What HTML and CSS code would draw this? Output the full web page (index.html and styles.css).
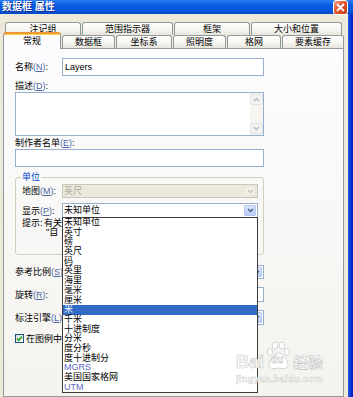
FILE: index.html
```html
<!DOCTYPE html>
<html lang="zh-CN">
<head>
    <meta charset="UTF-8">
    <meta name="viewport" content="width=device-width, initial-scale=1.0">
    <title>数据框 属性</title>
    <link rel="stylesheet" href="styles.css">
</head>
<body>

<div class="window">
    <div class="titlebar">
        <span class="title">数据框 属性</span>
        <span class="close">
            <svg width="9" height="9" viewBox="0 0 9 9"><path d="M1 1L8 8M8 1L1 8" stroke="#fff" stroke-width="1.8"/></svg>
        </span>
    </div>

    <div class="frame">
        <div class="dialog">
            <div class="tab-row back">
                <div class="tab w76">注记组</div>
                <div class="tab w91">范围指示器</div>
                <div class="tab w76">框架</div>
                <div class="tab w91">大小和位置</div>
            </div>
            <div class="tab-row front">
                <div class="tab active w58">常规</div>
                <div class="tab w53">数据框</div>
                <div class="tab w56">坐标系</div>
                <div class="tab w53">照明度</div>
                <div class="tab w54">格网</div>
                <div class="tab w62">要素缓存</div>
            </div>

            <div class="panel">
                <div class="form">
                    <div class="row">
                        <label class="lbl">名称<span class="key">(<u>N</u>)</span>:</label>
                        <input class="edit" type="text" value="Layers">
                    </div>

                    <div class="caption">描述<span class="key">(<u>D</u>)</span>:</div>
                    <div class="memo">
                        <div class="memo-text"></div>
                        <div class="vscroll">
                            <div class="sbtn"><svg width="7" height="5" viewBox="0 0 7 5"><path d="M1 4L3.5 1.5L6 4" stroke="#B4BAC4" stroke-width="1.3" fill="none"/></svg></div>
                            <div class="sbtn"><svg width="7" height="5" viewBox="0 0 7 5"><path d="M1 1L3.5 3.5L6 1" stroke="#B4BAC4" stroke-width="1.3" fill="none"/></svg></div>
                        </div>
                    </div>

                    <div class="caption tight">制作者名单<span class="key">(<u>E</u>)</span>:</div>
                    <input class="edit block" type="text" value="">

                    <fieldset class="group">
                        <legend>单位</legend>
                        <div class="row">
                            <label class="lbl short">地图<span class="key">(<u>M</u>)</span>:</label>
                            <div class="combo disabled h14">
                                <span class="val">英尺</span>
                                <span class="arrow"><svg width="7" height="5" viewBox="0 0 7 5"><path d="M1 1L3.5 3.5L6 1" stroke="#C9C7BA" stroke-width="1.4" fill="none"/></svg></span>
                            </div>
                        </div>
                        <div class="row gap5">
                            <label class="lbl short">显示<span class="key">(<u>P</u>)</span>:</label>
                            <div class="combo open">
                                <span class="val">未知单位</span>
                                <span class="arrow"><svg width="7" height="5" viewBox="0 0 7 5"><path d="M1 1L3.5 3.5L6 1" stroke="#4D6185" stroke-width="1.5" fill="none"/></svg></span>
                                <ul class="dropdown">
                                    <li>未知单位</li>
                                    <li>英寸</li>
                                    <li>磅</li>
                                    <li>英尺</li>
                                    <li>码</li>
                                    <li>英里</li>
                                    <li>海里</li>
                                    <li>毫米</li>
                                    <li>厘米</li>
                                    <li class="selected">米</li>
                                    <li>千米</li>
                                    <li>十进制度</li>
                                    <li>分米</li>
                                    <li>度分秒</li>
                                    <li>度十进制分</li>
                                    <li class="latin">MGRS</li>
                                    <li>美国国家格网</li>
                                    <li class="latin">UTM</li>
                                </ul>
                            </div>
                        </div>
                        <div class="hint">
                            <span class="hint-lbl">提示:</span>
                            <span class="hint-text">有关<br><span class="indent">"自</span></span>
                        </div>
                    </fieldset>

                    <div class="row gap10">
                        <label class="lbl">参考比例<span class="key">(<u>S</u>)</span></label>
                        <div class="combo h14">
                            <span class="val"></span>
                            <span class="arrow"><svg width="7" height="5" viewBox="0 0 7 5"><path d="M1 1L3.5 3.5L6 1" stroke="#4D6185" stroke-width="1.5" fill="none"/></svg></span>
                        </div>
                    </div>
                    <div class="row gap8">
                        <label class="lbl">旋转<span class="key">(<u>R</u>)</span>:</label>
                        <input class="edit h15" type="text" value="">
                    </div>
                    <div class="row gap8">
                        <label class="lbl">标注引擎<span class="key">(<u>L</u>)</span></label>
                        <div class="combo">
                            <span class="val"></span>
                            <span class="arrow"><svg width="7" height="5" viewBox="0 0 7 5"><path d="M1 1L3.5 3.5L6 1" stroke="#4D6185" stroke-width="1.5" fill="none"/></svg></span>
                        </div>
                    </div>
                    <div class="check-row">
                        <span class="checkbox"><svg width="7" height="7" viewBox="0 0 7 7"><path d="M1 3.5L2.8 5.3L6 1.5" stroke="#21A121" stroke-width="1.6" fill="none"/></svg></span>
                        <span class="check-text">在图例中</span>
                    </div>
                </div>
            </div>
        </div>
        <div class="edge"></div>
    </div>

    <div class="watermark">
        <div class="wm-top">
            <span class="wm-bai">Bai</span>
            <span class="wm-paw">
                <svg width="25" height="29" viewBox="0 0 25 29">
                    <ellipse cx="4" cy="11" rx="2.6" ry="3.4" fill="#fff" stroke="#C8C8C8" stroke-width="0.8"/>
                    <ellipse cx="9" cy="4.5" rx="2.8" ry="3.6" fill="#fff" stroke="#C8C8C8" stroke-width="0.8"/>
                    <ellipse cx="16" cy="4.5" rx="2.8" ry="3.6" fill="#fff" stroke="#C8C8C8" stroke-width="0.8"/>
                    <ellipse cx="21" cy="11" rx="2.6" ry="3.4" fill="#fff" stroke="#C8C8C8" stroke-width="0.8"/>
                    <path d="M12.5 12C8 12 3 20 3 24C3 28 8 28 12.5 27C17 28 22 28 22 24C22 20 17 12 12.5 12Z" fill="#fff" stroke="#C8C8C8" stroke-width="0.8"/>
                </svg>
                <span class="wm-du">du</span>
            </span>
            <span class="wm-jy">经验</span>
        </div>
        <div class="wm-url">jingyan.baidu.com</div>
    </div>
</div>

</body>
</html>
```

FILE: styles.css
```css
* {
    box-sizing: border-box;
}
body {
    margin: 0;
    width: 353px;
    height: 397px;
    overflow: hidden;
    font-family: "Liberation Sans", "Noto Sans CJK SC", sans-serif;
    font-size: 9px;
    color: #000;
    background: #ECE9D8;
}
.window {
    position: relative;
    width: 353px;
    height: 397px;
    display: flex;
    flex-direction: column;
}

/* title bar */
.titlebar {
    height: 14px;
    flex: none;
    display: flex;
    align-items: flex-start;
    justify-content: space-between;
    background: linear-gradient(#2C7CF2, #0A5DE6 35%, #0654DC 80%, #0846C2);
}
.title {
    color: #fff;
    font-weight: bold;
    font-size: 10px;
    line-height: 13px;
    padding-left: 2px;
    text-shadow: 1px 1px 0 #0B2A8A;
}
.close {
    width: 15px;
    height: 15px;
    margin-right: 5px;
    border: 1px solid #fff;
    border-radius: 3px;
    background: linear-gradient(135deg, #F2A48C, #E2572F 45%, #C23A16);
    display: flex;
    align-items: center;
    justify-content: center;
    position: relative;
    z-index: 3;
}

.frame {
    flex: 1;
    display: flex;
    min-height: 0;
}
.dialog {
    flex: 1;
    background: #ECE9D8;
    padding: 8px 4px 0 3px;
    display: flex;
    flex-direction: column;
}
.edge {
    width: 6px;
    flex: none;
    background: linear-gradient(90deg, #2A5CDB, #0831D9 45%, #0020A8);
}

/* tabs */
.tab-row {
    display: flex;
    gap: 1px;
    height: 13px;
    flex: none;
}
.tab-row.back {
    padding-left: 2px;
}
.tab-row.front {
    align-items: flex-end;
}
.tab {
    height: 13px;
    border: 1px solid #919B9C;
    border-bottom: none;
    border-radius: 3px 3px 0 0;
    background: linear-gradient(#FFFFFF, #F5F4EF 60%, #E6E4DA);
    text-align: center;
    line-height: 12px;
    white-space: nowrap;
}
.tab.active {
    height: 17px;
    margin-bottom: -1px;
    background: #FCFCFE;
    border-top: 2px solid #EC9A32;
    box-shadow: inset 0 1px 0 #FFCF5C;
    line-height: 14px;
    position: relative;
    z-index: 2;
}
.w53 { width: 53px; }
.w54 { width: 54px; }
.w56 { width: 56px; }
.w58 { width: 58px; }
.w62 { width: 62px; }
.w76 { width: 76px; }
.w91 { width: 91px; }

/* page */
.panel {
    flex: 1;
    border: 1px solid #919B9C;
    background: linear-gradient(#FCFCFE, #F4F3EE);
    padding: 9px 0 0 11px;
}
.form {
    width: 249px;
}
.row {
    display: flex;
    align-items: center;
}
.row.gap5 { margin-top: 5px; }
.row.gap8 { margin-top: 8px; }
.row.gap10 { margin-top: 10px; }
.lbl {
    width: 47px;
    flex: none;
    white-space: nowrap;
    overflow: hidden;
    line-height: 10px;
}
.lbl.short { width: 40px; }
.key {
    color: #4F68A6;
}
.edit {
    flex: 1;
    min-width: 0;
    height: 18px;
    border: 1px solid #98AECF;
    background: #fff;
    font: 9px "Liberation Sans", "Noto Sans CJK SC", sans-serif;
    padding: 0 2px;
    margin: 0;
    outline: none;
}
.edit.block {
    display: block;
    width: 100%;
    margin-top: 1px;
}
.edit.h15 { height: 15px; }
.caption {
    line-height: 10px;
    margin-top: 5px;
}
.caption.tight { margin-top: 2px; }
.memo {
    margin-top: 1px;
    height: 44px;
    display: flex;
    border: 1px solid #98AECF;
    background: #fff;
}
.memo-text { flex: 1; }
.vscroll {
    width: 13px;
    display: flex;
    flex-direction: column;
    justify-content: space-between;
    background: #F6F5F1;
    padding: 1px 0;
}
.sbtn {
    height: 11px;
    border: 1px solid #E0E2E6;
    border-radius: 2px;
    background: #F2F2EE;
    display: flex;
    align-items: center;
    justify-content: center;
}

/* units group */
.group {
    margin: 5px 0 0;
    padding: 2px 5px 17px 6px;
    border: 1px solid #D0D0BF;
    border-radius: 3px;
}
.group legend {
    padding: 0 1px;
    margin-left: -1px;
    color: #0046D5;
    line-height: 10px;
}
.combo {
    flex: 1;
    height: 15px;
    display: flex;
    border: 1px solid #98AECF;
    background: #fff;
}
.combo.h14 { height: 14px; }
.combo .val {
    flex: 1;
    padding-left: 1px;
    line-height: 12px;
    white-space: nowrap;
    overflow: hidden;
}
.combo .arrow {
    width: 12px;
    margin: 1px;
    border: 1px solid #B5C8F2;
    border-radius: 1px;
    background: linear-gradient(#DCE6FD, #B8CBF7);
    display: flex;
    align-items: center;
    justify-content: center;
}
.combo.disabled {
    border-color: #C9C7BA;
    background: #ECEADC;
    color: #ACA899;
}
.combo.disabled .arrow {
    border-color: #E8E6DC;
    background: #F1F0E8;
}
.combo.open {
    position: relative;
}
.dropdown {
    position: absolute;
    top: 100%;
    left: -1px;
    width: 196px;
    margin: 0;
    padding: 0;
    list-style: none;
    border: 1px solid #3C3C3C;
    background: #fff;
    z-index: 5;
}
.dropdown li {
    height: 9.7px;
    line-height: 9.7px;
    padding-left: 1px;
    white-space: nowrap;
}
.dropdown li.selected {
    background: #316AC5;
    color: #fff;
}
.dropdown li.latin {
    color: #5B68C4;
}
.hint {
    display: flex;
    margin-top: 1px;
    line-height: 9px;
}
.hint-lbl {
    width: 22px;
    flex: none;
}
.hint-text {
    white-space: nowrap;
}
.indent {
    padding-left: 2px;
}

.check-row {
    display: flex;
    align-items: center;
    gap: 2px;
    height: 10px;
    margin-top: 8px;
    white-space: nowrap;
}
.checkbox {
    width: 9px;
    height: 9px;
    border: 1px solid #1C5180;
    background: linear-gradient(135deg, #DCDCD7, #fff);
    display: flex;
    align-items: center;
    justify-content: center;
}

/* watermark */
.watermark {
    position: absolute;
    left: 236px;
    top: 341px;
    z-index: 10;
    color: #fff;
    -webkit-text-stroke: 0.6px #C4C4C4;
}
.wm-top {
    display: flex;
    align-items: flex-end;
    gap: 2px;
}
.wm-bai {
    font-family: "Liberation Sans", sans-serif;
    font-weight: bold;
    font-size: 18px;
    line-height: 16px;
}
.wm-paw {
    position: relative;
    width: 25px;
    height: 29px;
}
.wm-du {
    position: absolute;
    left: 5px;
    top: 13px;
    font-family: "Liberation Sans", sans-serif;
    font-weight: bold;
    font-size: 10px;
    line-height: 12px;
    -webkit-text-stroke: 0.5px #BDBDBD;
}
.wm-jy {
    font-family: "Noto Sans CJK SC", sans-serif;
    font-size: 15px;
    line-height: 16px;
    font-weight: bold;
}
.wm-url {
    margin-top: 5px;
    font-family: "Liberation Sans", sans-serif;
    font-weight: bold;
    font-size: 9.5px;
    line-height: 8px;
    letter-spacing: 0.2px;
    -webkit-text-stroke: 0.4px #C4C4C4;
}
```
